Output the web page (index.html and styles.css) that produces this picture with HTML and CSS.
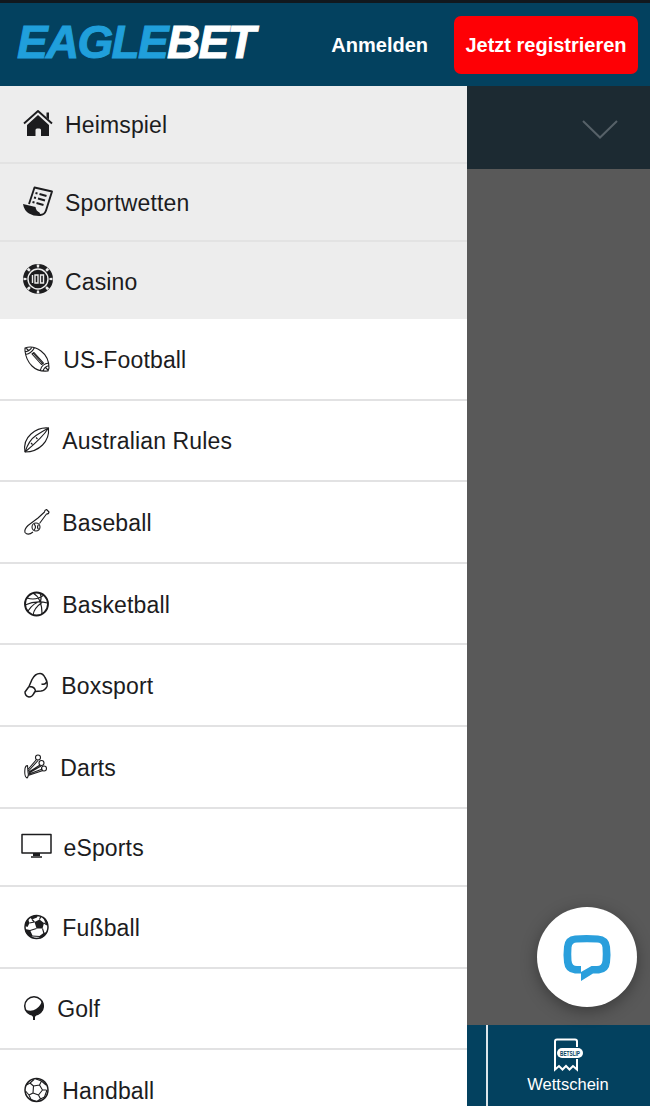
FILE: index.html
```html
<!DOCTYPE html>
<html lang="de">

<head>
    <meta charset="UTF-8">
    <meta content="width=device-width, initial-scale=1.0" name="viewport" />
    <title>EagleBet</title>
    <link rel="stylesheet" href="styles.css">
</head>

<body>
    <header class="topbar">
        <a class="logo">EAGLE<span>BET</span></a>
        <a class="login">Anmelden</a>
        <a class="register">Jetzt registrieren</a>
    </header>

    <div class="page">
        <ul class="menu">
            <li class="main">
                <svg class="icon" width="30" height="30" viewBox="0 0 30 30">
                    <path d="M4 17L15 7l11 10v11h-8v-6q0-1.500-1.500-1.500h-2.500q-1.500 0-1.500 1.500v6H4z" />
                    <path class="line thick" d="M1 15.500L15 3l14 12.500" />
                    <path d="M23.500 4.500H26v7l-2.500-2.200z" />
                </svg>
                <span>Heimspiel</span>
            </li>
            <li class="main">
                <svg class="icon" width="30" height="30" viewBox="0 0 30 30">
                    <path class="line thick" d="M6 18L11.500 1.500L29 5.500l-6 19q-1.500 4.500-6 4.500" />
                    <path d="M0 18l12.500 3q.5 4 4 5.500l1.500 3.500q-7 .5-12-2.500Q1 24.500 0 18z" />
                    <path class="line thick" d="M16.500 8l7 2M15 12.500l7 2M13.500 17l7 2" />
                    <path class="line thick" d="M12.500 7l2 .5M11 11.500l2 .5M9.500 16l2 .5" />
                </svg>
                <span>Sportwetten</span>
            </li>
            <li class="main">
                <svg class="icon" width="30" height="30" viewBox="0 0 30 30">
                    <circle cx="15" cy="15" r="15" />
                    <circle class="ring" cx="15" cy="15" r="10" />
                    <circle class="chips" cx="15" cy="15" r="13" pathLength="80" />
                    <path class="digits" d="M9.500 11v8M12 11h3v8h-3zM17.500 11h3v8h-3z" />
                </svg>
                <span>Casino</span>
            </li>
            <li>
                <svg class="icon" width="26" height="26" viewBox="0 0 26 26">
                    <path class="line" d="M1 2Q9-1 17 5t8 17l-1 3Q14 26 8 20T1 5zM1 6q5-1 7-5M1.500 8.500q6-1 9-7M16.500 24q1-6 8.500-7M19 25q1-4 6-5.500M2 2l3 3M21 21l3 3" />
                    <path class="line" d="M8 8l9.500 10.500 2-1.500L10 6.500zM9 7l9.500 10.500" />
                </svg>
                <span>US-Football</span>
            </li>
            <li>
                <svg class="icon" width="25" height="26" viewBox="0 0 25 26">
                    <path class="line" d="M1 25Q-1 14 7 7T24.500 1q1 10-6 17T1 25z" />
                    <path class="line" d="M1 25Q5 13 12 8.500T24.500 1Q19 10 1 25M7 16l1.500 1.500M12 10.500l1.500 1.500" />
                </svg>
                <span>Australian Rules</span>
            </li>
            <li>
                <svg class="icon" width="25" height="26" viewBox="0 0 25 26">
                    <path class="line" d="M9 23q-5 4-8 .5-1-3 3-7L14 9l6.500-6q0-2 2-2.500l2.500 2.500q0 2-2.500 2L15.500 14.500" />
                    <circle class="line" cx="12" cy="18" r="4" />
                    <path class="line" d="M10 15q3 3 0 6M14.500 15.500q-2 2.500 0 5" />
                </svg>
                <span>Baseball</span>
            </li>
            <li>
                <svg class="icon" width="25" height="26" viewBox="0 0 25 26">
                    <circle class="line thick" cx="12.500" cy="13" r="11.500" />
                    <path class="line" d="M9 2q9 5 9 21M3 7q9 3 17-3M1 14q11-5 22.500-2M16 2q2 4 .5 8.500M4 20q6-9 13-9.500M9 24q1-7 9-12.500" />
                </svg>
                <span>Basketball</span>
            </li>
            <li>
                <svg class="icon" width="24" height="26" viewBox="0 0 24 26">
                    <path class="line mid" d="M5 14.500L8 7.500q3-6 8-6 3 0 5 4 3 5 2 9-2 4-6 4.500l-6 .5M5 14.500q4 0 5.500 2t.5 3.500" />
                    <path class="line mid" d="M5 14.500L1 20q0 4 4 5 3 0 4.500-3l1.500-2.500M17.500 12q4 1 5-2" />
                </svg>
                <span>Boxsport</span>
            </li>
            <li>
                <svg class="icon" width="23" height="26" viewBox="0 0 23 26">
                    <path class="line" d="M3.500 11.500q-2 0-2.500 3-1 8 2 9.500 2-2 1-6zM4 15.500L12.500 5.500M4.500 17L14 6.500M5 18l11-7M5 19l12-7M5 20l13.500-5M4 21.500l15-5" />
                    <circle class="line" cx="14" cy="3.500" r="2.500" />
                    <circle class="line" cx="17.500" cy="9" r="2.500" />
                    <circle class="line" cx="20" cy="14.500" r="2.500" />
                </svg>
                <span>Darts</span>
            </li>
            <li class="short">
                <svg class="icon" width="31" height="25" viewBox="0 0 31 25">
                    <path class="line mid" d="M1 1.500h29v18.500H1zM10 24h11" />
                    <path d="M12 20h7v3h-7z" />
                </svg>
                <span>eSports</span>
            </li>
            <li>
                <svg class="icon" width="25" height="26" viewBox="0 0 25 26">
                    <circle class="line mid" cx="12.500" cy="13" r="11.500" />
                    <path d="M10.500 8l5-2.500 4.500 3.500-1.500 5.500h-6z" />
                    <path d="M6 3.500Q9 1 14 1l-1 2.500-5 2zM1 12q0-4 3-7l1.500 4-2 4zM1 15l5 1 2.500 5.500-1.500 2Q2 21 1 15zM19 2.500q5 3 5 9l-2-1-2-5zM15.500 22l4-3 3.500-1q-2 5-7 6.500z" />
                    <path class="line" d="M8 5.500L10.500 8M15.500 5.500L17 2M20 9l3 2M18.500 14.500l1.500 5M12.500 14.500L6 16.500M5.500 9l5-1M8 22l8 .5" />
                </svg>
                <span>Fußball</span>
            </li>
            <li>
                <svg class="icon" width="20" height="26" viewBox="0 0 20 26">
                    <circle class="line mid" cx="10" cy="11" r="9.300" />
                    <path d="M2 15q6 2 10-1 5-3 6-9 3 5 1 9-2 4-5 5-2 1-3 3v3H9v-3q-1-2-3-3-3-1-4-4z" />
                </svg>
                <span>Golf</span>
            </li>
            <li>
                <svg class="icon" width="25" height="26" viewBox="0 0 25 26">
                    <circle class="line mid" cx="12.500" cy="13" r="11.500" />
                    <path class="line" d="M9.500 9l6-1 3 5-4 5-5.500-2zM9.500 9L6 6M15.500 8l2-4M18.500 13h4M14.500 18l2 4M9 16l-4 2M2.500 8L6 6l4-3.500M12 2l5.500 2 4.500 4M5 18l-3.500-4M5 18l2 4.500 5.500 2M16.500 22l4-2 2.500-7M16.500 22l-3 2" />
                </svg>
                <span>Handball</span>
            </li>
        </ul>

        <div class="backdrop">
            <div class="dropdown">
                <svg width="36" height="20" viewBox="0 0 36 20">
                    <path d="M1 1l17 16.500L35 1" />
                </svg>
            </div>
            <div class="bottom-nav">
                <a class="betslip">
                    <svg width="30" height="34" viewBox="0 0 30 34">
                        <path class="paper" d="M24 9V3.500q0-2-2-2H4q-2 0-2 2v28l4-3.500 3.500 3.500L13 28l3.500 3.500L20 28l4 3.500V21" />
                        <rect x="4" y="10" width="26" height="10" rx="5" />
                        <text x="7" y="17.500" textLength="20" lengthAdjust="spacingAndGlyphs">BETSLIP</text>
                    </svg>
                    <span>Wettschein</span>
                </a>
            </div>
            <a class="chat">
                <svg width="48" height="48" viewBox="0 0 48 48">
                    <path fill-rule="evenodd" d="M12 1.500Q23.500.5 35 1.500q11 1 12 11 1 8 0 16-1 10-11 11h-6L18 47v-7.500h-6Q2 38.500 1 28.500q-1-8 0-16 1-10 11-11zM14 8.500q-5 0-5.500 5-.5 7 0 13 .5 5.500 5.500 5.500h4v6l10.500-6H34q5 0 5.500-5.500.5-6 0-13-.5-5-5.500-5-10-.5-20 0z" />
                </svg>
            </a>
        </div>
    </div>
</body>

</html>
```
FILE: styles.css
```css
* {
    box-sizing: border-box;
}

body {
    margin: 0;
    height: 1106px;
    overflow: hidden;
    font-family: "Liberation Sans", Arial, sans-serif;
    color: #1c1c1e;
}

.topbar {
    display: flex;
    align-items: center;
    height: 86px;
    padding: 0 12px 0 17px;
    border-top: 3px solid #11181e;
    background-color: #03415f;
    color: #fff;
    font-size: 20px;
    font-weight: bold;
    white-space: nowrap;
}

.logo {
    flex: 1;
    font-size: 46px;
    line-height: 50px;
    font-style: italic;
    letter-spacing: -1.7px;
    color: #209fdb;
    -webkit-text-stroke: 1px #209fdb;
    padding-bottom: 6px;
}

.logo span {
    color: #fff;
    -webkit-text-stroke-color: #fff;
}

.login {
    margin-right: 26px;
    padding-top: 2px;
}

.register {
    width: 184px;
    height: 58px;
    line-height: 58px;
    border-radius: 7px;
    background-color: #fe0005;
    text-align: center;
}

.page {
    display: flex;
    height: 1020px;
}

.menu {
    width: 467px;
    height: 1020px;
    margin: 0;
    padding: 0;
    overflow: hidden;
    list-style: none;
    background-color: #fff;
}

.menu li {
    display: flex;
    align-items: center;
    gap: 13.3px;
    height: 81.6px;
    padding-left: 24px;
    border-bottom: 2px solid #e2e2e3;
    font-size: 23px;
    letter-spacing: 0.15px;
}

.menu li span {
    padding-top: 3px;
}

.menu li.main {
    gap: 12px;
    height: 78px;
    padding-left: 23px;
    border-color: #e3e3e3;
    background-color: #ededed;
}

.menu li.main:nth-child(3) {
    height: 77px;
    border-bottom: 0;
}

.menu li.short {
    gap: 11.5px;
    height: 78.4px;
    padding-left: 21px;
}

.icon {
    flex: none;
    fill: #1c1c1e;
    overflow: visible;
}

.main .icon,
.short .icon {
    margin-bottom: 3px;
}

.icon .line {
    fill: none;
    stroke: #1c1c1e;
    stroke-width: 1.1;
    stroke-linejoin: round;
}

.icon .mid {
    stroke-width: 1.5;
}

.icon .thick {
    stroke-width: 1.9;
}

.icon .ring,
.icon .chips,
.icon .digits {
    fill: none;
    stroke: #ededed;
    stroke-width: 1.4;
}

.icon .chips {
    stroke-width: 3;
    stroke-dasharray: 2.5 7.5;
    stroke-dashoffset: 1.25;
}

.backdrop {
    position: relative;
    display: flex;
    flex: 1;
    flex-direction: column;
    justify-content: space-between;
    background-color: #595959;
}

.dropdown {
    display: flex;
    align-items: center;
    justify-content: flex-end;
    height: 83px;
    padding: 4px 32px 0 0;
    background-color: #1c2a32;
}

.dropdown path {
    fill: none;
    stroke: #566168;
    stroke-width: 2;
}

.bottom-nav {
    height: 81px;
    padding-left: 19px;
    background-color: #03415f;
}

.betslip {
    display: flex;
    flex-direction: column;
    align-items: center;
    height: 81px;
    padding: 13px 2px 0 0;
    border-left: 2px solid #dce5ea;
    color: #fff;
    font-size: 16.5px;
}

.betslip span {
    margin-top: 3px;
}

.betslip svg {
    fill: #fff;
    overflow: visible;
}

.betslip .paper {
    fill: none;
    stroke: #fff;
    stroke-width: 2;
}

.betslip text {
    fill: #03415f;
    font-size: 7px;
    font-weight: bold;
}

/* floating chat button */
.chat {
    position: absolute;
    right: 13px;
    bottom: 99px;
    display: flex;
    align-items: center;
    justify-content: center;
    width: 100px;
    height: 100px;
    border-radius: 50%;
    background-color: #fff;
    box-shadow: 0 4px 16px rgba(0, 0, 0, 0.35);
}

.chat svg {
    margin-top: 2px;
    fill: #2a9fdc;
}
```
